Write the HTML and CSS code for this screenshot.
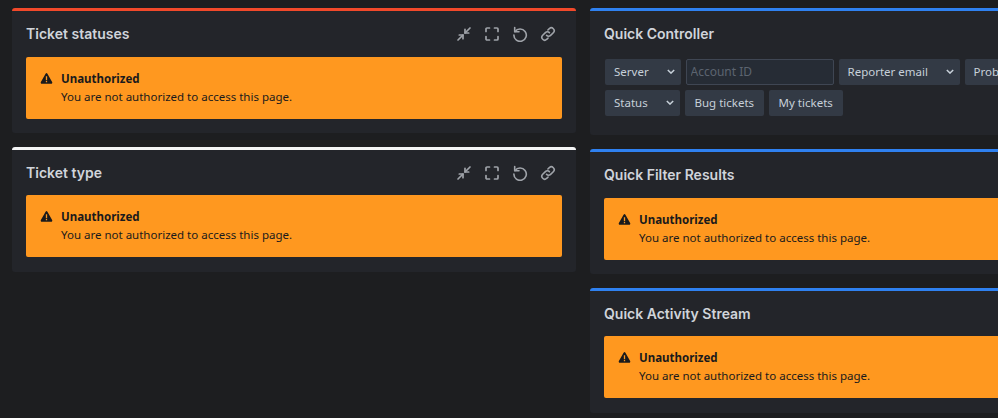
FILE: index.html
```html
<!DOCTYPE html>
<html lang="en">
<head>
<meta charset="utf-8">
<title>Tickets</title>
<link rel="stylesheet" href="styles.css">
</head>
<body>
<svg class="defs" width="0" height="0" aria-hidden="true">
  <symbol id="warn" viewBox="0 0 24 24"><path fill="currentColor" d="M10.3 3.2 1.6 18.6A2 2 0 0 0 3.3 21.6h17.4a2 2 0 0 0 1.7-3L13.7 3.2a2 2 0 0 0-3.4 0ZM10.8 8h2.4v7h-2.4Zm0 8.6h2.4V19h-2.4Z" fill-rule="evenodd"/></symbol>
  <symbol id="collapse" viewBox="0 0 16 16"><g fill="none" stroke="currentColor" stroke-width="1.700" stroke-linecap="round" stroke-linejoin="round"><path d="M14 2 9 7M2 14l5-5"/><path d="M9 3.300V7h3.700M7 12.700V9H3.300"/></g></symbol>
  <symbol id="full" viewBox="0 0 16 16"><path fill="none" stroke="currentColor" stroke-width="1.700" stroke-linecap="round" stroke-linejoin="round" d="M2 5.500V3a1 1 0 0 1 1-1h2.500M10.500 2H13a1 1 0 0 1 1 1v2.500M14 10.500V13a1 1 0 0 1-1 1h-2.500M5.500 14H3a1 1 0 0 1-1-1v-2.500"/></symbol>
  <symbol id="undo" viewBox="0 0 16 16"><g fill="none" stroke="currentColor" stroke-width="1.600" stroke-linecap="round" stroke-linejoin="round"><path d="M3 5.600A6.200 6.200 0 1 1 1.900 9"/><path d="M2.700 1.500v4.300H7"/></g></symbol>
  <symbol id="link" viewBox="0 0 16 16"><g fill="none" stroke="currentColor" stroke-width="1.600" stroke-linecap="round"><path d="M6.600 9.400a2.800 2.800 0 0 0 4 0l2.700-2.700a2.800 2.800 0 0 0-4-4L7.900 4"/><path d="M9.400 6.600a2.800 2.800 0 0 0-4 0L2.700 9.300a2.800 2.800 0 0 0 4 4L8.100 12"/></g></symbol>
</svg>
<main class="board">
  <div class="column left-col">
    <section class="card card-red">
      <header class="card-head">
        <h2 class="card-title">Ticket statuses</h2>
        <div class="tools">
          <svg class="tool"><use href="#collapse"/></svg>
          <svg class="tool"><use href="#full"/></svg>
          <svg class="tool"><use href="#undo"/></svg>
          <svg class="tool"><use href="#link"/></svg>
        </div>
      </header>
      <div class="alert">
        <svg class="alert-icon"><use href="#warn"/></svg>
        <div><strong class="alert-title">Unauthorized</strong><p class="alert-text">You are not authorized to access this page.</p></div>
      </div>
    </section>
    <section class="card card-white">
      <header class="card-head">
        <h2 class="card-title">Ticket type</h2>
        <div class="tools">
          <svg class="tool"><use href="#collapse"/></svg>
          <svg class="tool"><use href="#full"/></svg>
          <svg class="tool"><use href="#undo"/></svg>
          <svg class="tool"><use href="#link"/></svg>
        </div>
      </header>
      <div class="alert">
        <svg class="alert-icon"><use href="#warn"/></svg>
        <div><strong class="alert-title">Unauthorized</strong><p class="alert-text">You are not authorized to access this page.</p></div>
      </div>
    </section>
  </div>
  <div class="column right-col">
    <section class="card card-blue controller">
      <header class="card-head">
        <h2 class="card-title">Quick Controller</h2>
      </header>
      <div class="controls">
        <div class="control-row">
          <span class="select sel-server">Server<svg class="chev" viewBox="0 0 10 6"><path d="M1 1l4 4 4-4" fill="none" stroke="currentColor" stroke-width="1.800"/></svg></span>
          <input class="text-input" placeholder="Account ID">
          <span class="select sel-email">Reporter email<svg class="chev" viewBox="0 0 10 6"><path d="M1 1l4 4 4-4" fill="none" stroke="currentColor" stroke-width="1.800"/></svg></span>
          <span class="select sel-problem">Prob</span>
        </div>
        <div class="control-row">
          <span class="select sel-status">Status<svg class="chev" viewBox="0 0 10 6"><path d="M1 1l4 4 4-4" fill="none" stroke="currentColor" stroke-width="1.800"/></svg></span>
          <button class="btn">Bug tickets</button>
          <button class="btn">My tickets</button>
        </div>
      </div>
    </section>
    <section class="card card-blue">
      <header class="card-head">
        <h2 class="card-title">Quick Filter Results</h2>
      </header>
      <div class="alert">
        <svg class="alert-icon"><use href="#warn"/></svg>
        <div><strong class="alert-title">Unauthorized</strong><p class="alert-text">You are not authorized to access this page.</p></div>
      </div>
    </section>
    <section class="card card-blue">
      <header class="card-head">
        <h2 class="card-title">Quick Activity Stream</h2>
      </header>
      <div class="alert">
        <svg class="alert-icon"><use href="#warn"/></svg>
        <div><strong class="alert-title">Unauthorized</strong><p class="alert-text">You are not authorized to access this page.</p></div>
      </div>
    </section>
  </div>
</main>
</body>
</html>
```
FILE: styles.css
```css
* { box-sizing: border-box; }
html, body { margin: 0; height: 100%; overflow: hidden; background: #1d1e20; }
body { font-family: "Noto Sans", sans-serif; color: #c7d0d9; }
.defs { position: absolute; }
.board { display: flex; gap: 14px; width: 1200px; padding: 8px 0 0 12px; }
.column { display: flex; flex-direction: column; width: 564px; flex: none; gap: 13.6px; }
.right-col { width: 600px; }
.card { background: #23252a; border-top: 3px solid #fff; border-radius: 3px; padding: 0 14px 14.4px; }
.card-red { border-top-color: #f2492a; }
.card-white { border-top-color: #f4f5f5; }
.card-blue { border-top-color: #2f81f0; }
.card-head { display: flex; align-items: flex-start; justify-content: space-between; height: 45.6px; padding-top: 13.1px; }
.card-title { margin: 0; font: 600 14px/20px Inter, sans-serif; color: #d0d4da; }
.tools { display: flex; gap: 12px; padding: 2px 6px 0 0; }
.tool { width: 16px; height: 16px; color: #9fa3a9; }
.alert { display: flex; gap: 8px; height: 62px; padding: 13px 14px; background: #ff981f; border-radius: 2px; color: #1a1a1c; }
.alert-icon { width: 13px; height: 13px; margin-top: 2px; flex: none; }
.alert-title { display: block; font: 700 11.5px/17px "Noto Sans", sans-serif; }
.alert-text { margin: 0; font: 400 11.5px/19px "Noto Sans", sans-serif; }
.controller { padding-bottom: 19.4px; }
.controls { display: flex; flex-direction: column; gap: 5px; padding: 2.4px 0 0 1px; }
.control-row { display: flex; gap: 4.5px; }
.select, .btn { display: flex; align-items: center; height: 26px; background: #333a45; border: 0; border-radius: 2px; color: #c7d0d9; font: 400 11.5px "Noto Sans", sans-serif; white-space: nowrap; }
.select { justify-content: space-between; padding: 0 6.500px 0 9px; }
.sel-server { width: 76px; }
.sel-email { width: 121.5px; }
.sel-problem { width: 130px; justify-content: flex-start; }
.sel-status { width: 75px; }
.chev { width: 8px; height: 5px; color: #c7d0d9; }
.btn { padding: 0 10px; }
.text-input { width: 148.500px; height: 26px; background: #262c35; border: 1px solid #3f4653; border-radius: 2px; padding: 0 4px; font: 400 12px "Noto Sans", sans-serif; color: #c7d0d9; }
.text-input::placeholder { color: #5c6470; opacity: 1; }
```
